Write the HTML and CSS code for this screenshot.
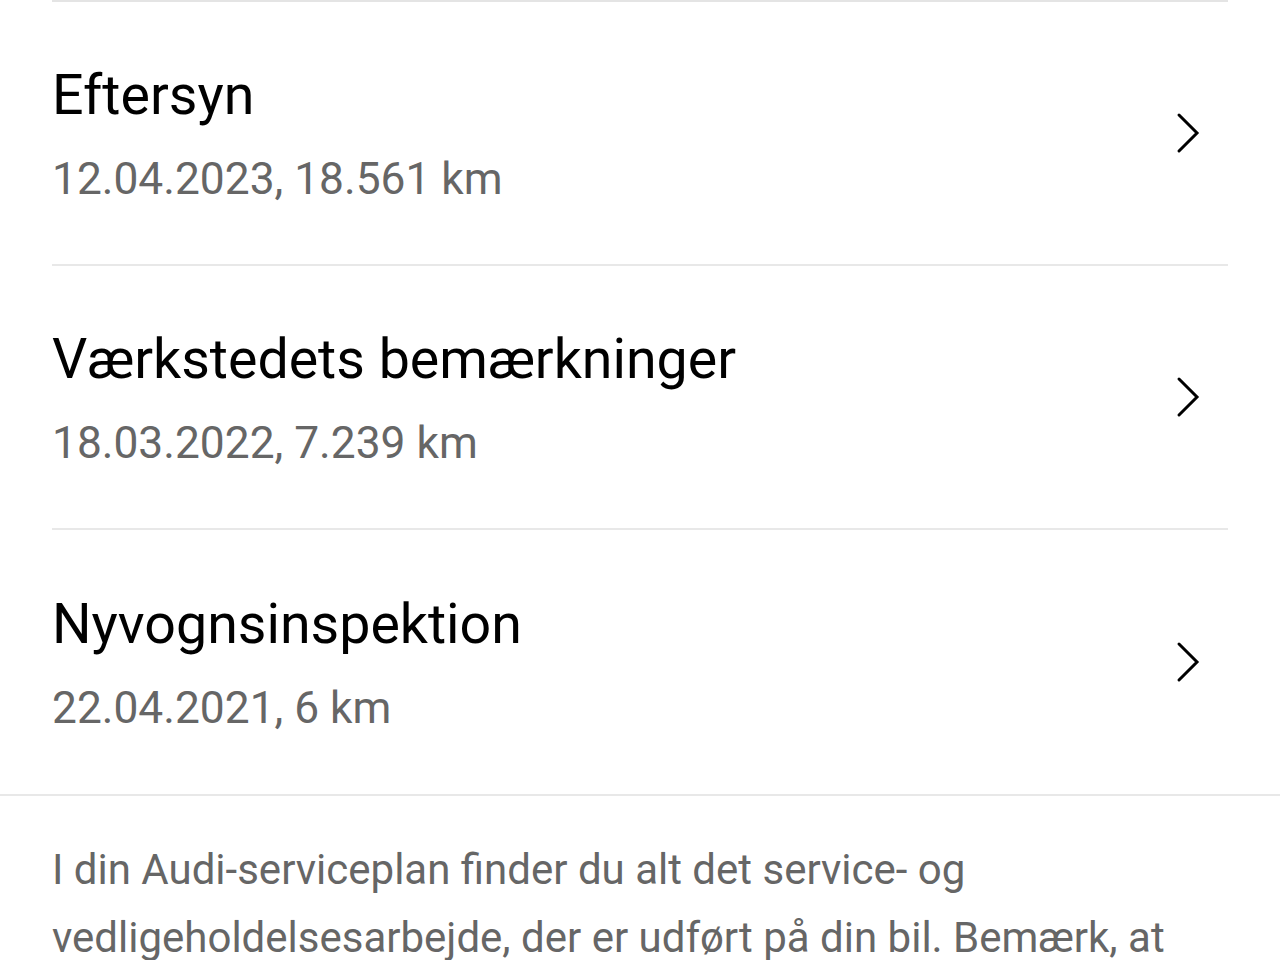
FILE: index.html
```html
<!DOCTYPE html>
<html>
<head>
  <meta charset="utf-8">
  <meta name="viewport" content="width=device-width">
  <title>Serviceplan</title>
  <link rel="stylesheet" href="styles.css">
</head>
<body>
    <section class="list">
        <a class="row" href="#">
            <div class="info">
                <p class="title">Eftersyn</p>
                <p class="sub">12.04.2023, 18.561 km</p>
            </div>
            <svg class="chev" width="24" height="42" viewBox="0 0 24 42"><path d="M3 3 L21 21 L3 39" fill="none" stroke="#000" stroke-width="3" stroke-linecap="round" stroke-linejoin="miter"/></svg>
        </a>
        <a class="row" href="#">
            <div class="info">
                <p class="title">Værkstedets bemærkninger</p>
                <p class="sub">18.03.2022, 7.239 km</p>
            </div>
            <svg class="chev" width="24" height="42" viewBox="0 0 24 42"><path d="M3 3 L21 21 L3 39" fill="none" stroke="#000" stroke-width="3" stroke-linecap="round" stroke-linejoin="miter"/></svg>
        </a>
        <a class="row last" href="#">
            <div class="info">
                <p class="title">Nyvognsinspektion</p>
                <p class="sub">22.04.2021, 6 km</p>
            </div>
            <svg class="chev" width="24" height="42" viewBox="0 0 24 42"><path d="M3 3 L21 21 L3 39" fill="none" stroke="#000" stroke-width="3" stroke-linecap="round" stroke-linejoin="miter"/></svg>
        </a>
    </section>
    <p class="note">I din Audi-serviceplan finder du alt det service- og vedligeholdelsesarbejde, der er udført på din bil. Bemærk, at</p>
</body>
</html>
```

FILE: styles.css
```css
* {
    box-sizing: border-box;
    font-family: Roboto, "Noto Sans", sans-serif;
}
body {
    margin: 0;
    padding: 0;
    background-color: white;
    overflow: hidden;
}
.list {
    border-bottom: 2px solid #e8e8e8;
}
.list::before {
    content: "";
    display: block;
    margin: 0 52px;
    border-top: 2px solid #e4e4e4;
}
.row {
    display: flex;
    align-items: center;
    justify-content: space-between;
    height: 264px;
    margin: 0 52px;
    padding-right: 28px;
    border-bottom: 2px solid #e8e8e8;
    text-decoration: none;
}
.row.last {
    border-bottom: none;
}
.info {
    padding-top: 2px;
}
.title {
    margin: 0;
    font-size: 55.5px;
    line-height: 66px;
    color: #000;
}
.sub {
    margin: 24px 0 0;
    font-size: 44.3px;
    line-height: 52px;
    color: #666;
}
.chev {
    display: block;
}
.note {
    margin: 0;
    padding: 40px 52px 0;
    font-size: 42px;
    line-height: 68px;
    color: #666;
}
```
